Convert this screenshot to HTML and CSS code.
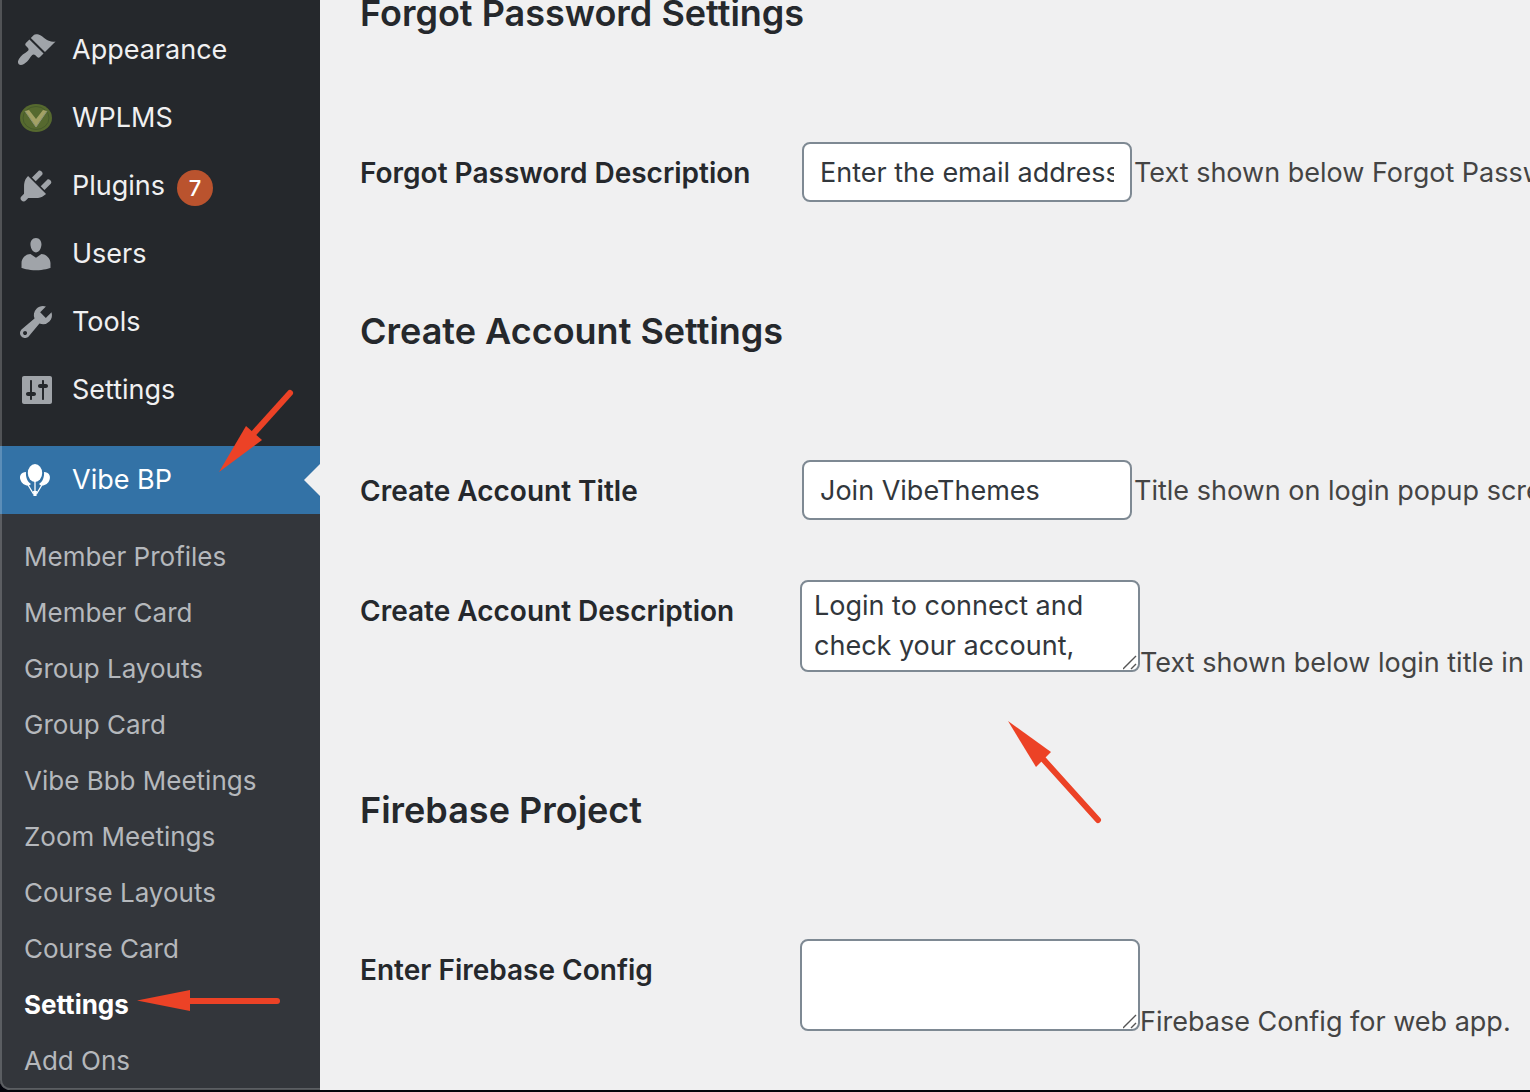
FILE: index.html
```html
<!DOCTYPE html>
<html lang="en">
<head>
<meta charset="utf-8">
<title>Vibe BP Settings</title>
<link rel="stylesheet" href="styles.css">
</head>
<body>
<div class="window">
  <nav class="sidebar" aria-label="Main menu">
    <ul class="menu">
      <li><a class="menu-link" href="#appearance">
        <svg class="icon" viewBox="0 0 20 20" aria-hidden="true"><path d="M14.48 11.06L7.41 3.99l1.5-1.5c.5-.56 2.3-.47 3.51.32 1.21.8 1.43 1.28 2.91 2.1 1.18.64 2.45 1.26 4.45.85zm-.71.71L6.7 4.7 4.93 6.47c-.39.39-.39 1.02 0 1.41l1.06 1.06c.39.39.39 1.03 0 1.42-.6.6-1.43 1.11-2.21 1.69-.35.26-.7.53-1.01.84C1.43 14.23.4 16.08 1.4 17.07c.99 1 2.84-.03 4.18-1.36.31-.31.58-.66.85-1.02.57-.78 1.08-1.61 1.69-2.21.39-.39 1.02-.39 1.41 0l1.06 1.06c.39.39 1.02.39 1.41 0z"/></svg>
        Appearance</a></li>
      <li><a class="menu-link" href="#wplms">
        <svg class="icon" viewBox="0 0 40 40" aria-hidden="true"><ellipse cx="20" cy="20" rx="16" ry="14" fill="#56692f"/><ellipse cx="20" cy="20" rx="13" ry="11.500" fill="none" stroke="#465a2b" stroke-width="1"/><path d="M9 13l4-1 7 9 7-9 4 1-11 16z" fill="#a3a164"/><path d="M9 13l11 16 11-16" fill="none" stroke="#8b9378" stroke-width="1"/></svg>
        WPLMS</a></li>
      <li><a class="menu-link" href="#plugins">
        <svg class="icon" viewBox="0 0 20 20" aria-hidden="true"><path d="M13.11 4.36L9.87 7.6 8 5.73l3.24-3.24c.35-.34 1.05-.2 1.56.32.52.51.66 1.21.31 1.55zm-8 1.77l.91-1.12 9.01 9.01-1.19.84c-.71.71-2.63 1.16-3.82 1.16H6.14L4.9 17.26c-.59.59-1.54.59-2.12 0a1.49 1.49 0 0 1 0-2.12l1.24-1.24v-3.88c0-1.13.4-3.19 1.09-3.89zm7.26 3.97l3.24-3.24c.34-.35 1.04-.21 1.55.31.52.51.66 1.21.31 1.55l-3.24 3.25z"/></svg>
        Plugins <span class="count">7</span></a></li>
      <li><a class="menu-link" href="#users">
        <svg class="icon" viewBox="0 0 20 20" aria-hidden="true"><path d="M10 9.250c-2.270 0-2.730-3.440-2.730-3.440C7 4.020 7.820 2 9.970 2c2.160 0 2.980 2.020 2.710 3.810 0 0-.41 3.440-2.680 3.440zm0 2.570L12.720 10c2.390 0 4.520 2.330 4.520 4.530v2.490s-3.650 1.130-7.240 1.130c-3.650 0-7.240-1.130-7.240-1.130v-2.490c0-2.250 1.940-4.480 4.470-4.480z"/></svg>
        Users</a></li>
      <li><a class="menu-link" href="#tools">
        <svg class="icon" viewBox="0 0 20 20" aria-hidden="true"><path d="M16.68 9.77a4.543 4.543 0 0 1-4.95.99l-5.41 6.52c-.99.99-2.59.99-3.58 0s-.99-2.59 0-3.57l6.52-5.42c-.68-1.65-.35-3.61.99-4.95 1.28-1.28 3.12-1.62 4.72-1.06l-2.89 2.89 2.82 2.82 2.86-2.87c.53 1.58.18 3.39-1.08 4.65zM3.81 16.21c.4.39 1.04.39 1.43 0 .4-.4.4-1.04 0-1.43-.39-.4-1.03-.4-1.43 0a1.02 1.02 0 0 0 0 1.43z"/></svg>
        Tools</a></li>
      <li><a class="menu-link" href="#settings">
        <svg class="icon" viewBox="0 0 20 20" aria-hidden="true"><path d="M18 16V4c0-.55-.45-1-1-1H4c-.55 0-1 .45-1 1v12c0 .55.45 1 1 1h13c.55 0 1-.45 1-1zM8 11h1c.55 0 1 .45 1 1s-.45 1-1 1H8v1.500c0 .28-.22.5-.5.5s-.5-.22-.5-.5V13H6c-.55 0-1-.45-1-1s.45-1 1-1h1V5.500c0-.28.22-.5.5-.5s.5.22.5.5V11zm6-2h-1v5.500c0 .28.22.5.5.5s.5-.22.5-.5V9h1c.55 0 1-.45 1-1s-.45-1-1-1h-1V5.500c0-.28-.22-.5-.5-.5s-.5.22-.5.5V7h-1c-.55 0-1 .45-1 1s.45 1 1 1h1z" fill-rule="evenodd"/></svg>
        Settings</a></li>
      <li class="menu-group">
        <a class="menu-link current" href="#vibebp">
          <svg class="icon" viewBox="0 0 40 40" aria-hidden="true"><ellipse cx="19" cy="13" rx="7.200" ry="9"/><path d="M10 12C5 12 3 16 4.500 20c1 3 4 5.500 7.500 5.500 1 0 2-.5 3-1.500-3.500-2-5.500-7-5-12zM28 12c5 0 7 4 5.500 8-1 3-4 5.500-7.500 5.500-1 0-2-.5-3-1.500 3.500-2 5.500-7 5-12z"/><path d="M17.500 34l-6-10M19 34V21M20.500 34l6-10" fill="none" stroke="#fff" stroke-width="1.300"/><path d="M17 31h4l-.5 5h-3z"/></svg>
          Vibe BP</a>
        <ul class="submenu">
          <li><a href="#member-profiles">Member Profiles</a></li>
          <li><a href="#member-card">Member Card</a></li>
          <li><a href="#group-layouts">Group Layouts</a></li>
          <li><a href="#group-card">Group Card</a></li>
          <li><a href="#bbb-meetings">Vibe Bbb Meetings</a></li>
          <li><a href="#zoom-meetings">Zoom Meetings</a></li>
          <li><a href="#course-layouts">Course Layouts</a></li>
          <li><a href="#course-card">Course Card</a></li>
          <li><a class="active" href="#vibebp-settings">Settings</a></li>
          <li><a href="#add-ons">Add Ons</a></li>
        </ul>
      </li>
    </ul>
  </nav>
  <main class="content">
    <h2>Forgot Password Settings</h2>
    <table class="form-table">
      <tr>
        <th scope="row"><label for="forgot-desc">Forgot Password Description</label></th>
        <td><input class="field" id="forgot-desc" type="text" value="Enter the email address"><span>Text shown below Forgot Password</span></td>
      </tr>
    </table>
    <h2>Create Account Settings</h2>
    <table class="form-table">
      <tr>
        <th scope="row"><label for="create-title">Create Account Title</label></th>
        <td><input class="field" id="create-title" type="text" value="Join VibeThemes"><span>Title shown on login popup screen</span></td>
      </tr>
      <tr>
        <th scope="row"><label for="create-desc">Create Account Description</label></th>
        <td><textarea class="area" id="create-desc">Login to connect and check your account,</textarea><span>Text shown below login title in</span></td>
      </tr>
    </table>
    <h2>Firebase Project</h2>
    <table class="form-table">
      <tr>
        <th scope="row"><label for="firebase">Enter Firebase Config</label></th>
        <td><textarea class="area" id="firebase"></textarea><span>Firebase Config for web app.</span></td>
      </tr>
    </table>
  </main>
  <svg class="arrow arrow-menu" width="80" height="95" viewBox="0 0 80 95" aria-hidden="true"><path d="M72 12L36 52" class="shaft"/><path d="M1 91L28 45l16 14z"/></svg>
  <svg class="arrow arrow-submenu" width="150" height="30" viewBox="0 0 150 30" aria-hidden="true"><path d="M140 16H50" class="shaft"/><path d="M0 15.500L53 5v21z"/></svg>
  <svg class="arrow arrow-field" width="100" height="110" viewBox="0 0 100 110" aria-hidden="true"><path d="M90 100L35 39" class="shaft"/><path d="M0 1l43 31-15 15z"/></svg>
</div>
</body>
</html>
```
FILE: styles.css
```css
* { box-sizing: border-box; }

body {
  margin: 0;
  background: #03040c;
  color: #3c434a;
  font: 27px/40px Inter, "Liberation Sans", sans-serif;
  overflow: hidden;
}

.window {
  position: relative;
  display: flex;
  min-height: calc(100vh - 2px);
  margin-bottom: 2px;
  border-radius: 0 0 0 10px;
  overflow: hidden;
  background: #f0f0f1;
}

.sidebar {
  position: relative;
  flex: 0 0 320px;
  padding-top: 16px;
  background: #25282c;
}

/* light edge of the window frame */
.sidebar::after {
  content: "";
  position: absolute;
  inset: 0;
  border: solid rgba(255, 255, 255, 0.2);
  border-width: 0 0 2px 2px;
  border-bottom-left-radius: 10px;
  pointer-events: none;
}

.menu, .submenu {
  margin: 0;
  padding: 0;
  list-style: none;
}

.menu-link {
  display: flex;
  align-items: center;
  height: 68px;
  padding-left: 16px;
  color: #f0f0f1;
  text-decoration: none;
}

.icon {
  flex: none;
  width: 40px;
  height: 40px;
  margin-right: 16px;
  fill: #a0a4a9;
}

.count {
  width: 36px;
  height: 36px;
  margin: 4px 0 0 12px;
  border-radius: 50%;
  background: #ba532e;
  color: #fff;
  font-size: 22px;
  font-weight: 500;
  line-height: 36px;
  text-align: center;
}

.menu-group { margin-top: 22px; }

.current {
  position: relative;
  background: #3372a6;
  color: #fff;
}

.current .icon { fill: #fff; }

.current::after {
  content: "";
  position: absolute;
  right: 0;
  top: 18px;
  border: 16px solid transparent;
  border-right-color: #f0f0f1;
  border-left-width: 0;
}

.submenu {
  padding-top: 15px;
  background: #33363b;
}

.submenu a {
  display: block;
  padding-left: 24px;
  color: #b5b8bc;
  font-size: 26px;
  line-height: 56px;
  text-decoration: none;
}

.submenu .active {
  color: #fff;
  font-weight: 700;
}

.content {
  flex: 1;
  min-width: 0;
  padding-left: 40px;
  overflow: hidden;
}

h2 {
  margin: 86px 0;
  color: #25282c;
  font-size: 36px;
  font-weight: 600;
  line-height: 26px;
}

h2:first-child { margin-top: 0; }

.form-table {
  width: 100%;
  border-collapse: collapse;
  table-layout: fixed;
}

.form-table tr { height: 120px; }

.form-table th {
  width: 440px;
  padding: 41px 0 0;
  color: #25282c;
  font-size: 28px;
  font-weight: 600;
  text-align: left;
  vertical-align: top;
}

.form-table td {
  padding: 30px 0 28px;
  color: #444;
  vertical-align: top;
  white-space: nowrap;
}

.field, .area {
  border: 2px solid #7e8993;
  border-radius: 8px;
  background: #fff;
  color: #32373c;
  font: inherit;
}

.field {
  width: 330px;
  height: 60px;
  margin: 0 2px;
  padding: 0 16px;
}

.area {
  width: 340px;
  height: 92px;
  padding: 4px 12px;
  overflow: hidden;
  resize: both;
  vertical-align: baseline;
}

.area::-webkit-resizer {
  background: url("data:image/svg+xml,%3Csvg xmlns='http://www.w3.org/2000/svg' width='15' height='15'%3E%3Cpath d='M0 14L13 1M8 14l5-5' stroke='%23555' stroke-width='1.4' fill='none'/%3E%3C/svg%3E") no-repeat;
}

.arrow {
  position: absolute;
  fill: #ec4226;
  pointer-events: none;
}

.shaft {
  fill: none;
  stroke: #ec4226;
  stroke-width: 6px;
  stroke-linecap: round;
}

.arrow-menu { left: 218px; top: 381px; }
.arrow-submenu { left: 137px; top: 985px; }
.arrow-field { left: 1008px; top: 720px; }
```
